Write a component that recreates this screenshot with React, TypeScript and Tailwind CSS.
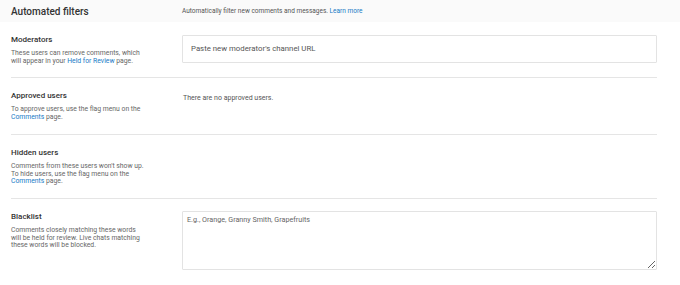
const font = { fontFamily: "Roboto, 'Liberation Sans', sans-serif" };

type RowProps = {
  title: string;
  children: React.ReactNode;
  desc: React.ReactNode;
  last?: boolean;
};

function Row({ title, desc, children, last }: RowProps) {
  return (
    <div className={`flex pt-[13px] pb-[12px] ${last ? "" : "border-b border-[#e5e5e5]"}`}>
      <div className="w-[171px] shrink-0 pr-4">
        <h3 className="text-[8px] leading-[10px] font-medium text-[#333]">{title}</h3>
        <p className="mt-[5px] text-[6.8px] leading-[7.7px] text-[#666] w-[136px]">{desc}</p>
      </div>
      <div className="flex-1">{children}</div>
    </div>
  );
}

const Link = ({ children }: { children: React.ReactNode }) => (
  <a className="text-[#167ac6]">{children}</a>
);

export default function App() {
  return (
    <div className="w-[680px] h-[285px] bg-white overflow-hidden" style={font}>
      <div className="h-[22px] bg-[#fafafa] flex items-center pl-[11px]">
        <h2 className="w-[171px] shrink-0 text-[10px] font-medium text-[#333] pt-[1px]">
          Automated filters
        </h2>
        <p className="text-[6.5px] text-[#555] pt-[2px]">
          Automatically filter new comments and messages. <Link>Learn more</Link>
        </p>
      </div>

      <div className="pl-[11px] pr-[23px]">
        <Row
          title="Moderators"
          desc={
            <>
              These users can remove comments, which will appear in your <Link>Held for Review</Link> page.
            </>
          }
        >
          <div className="h-[28px] border border-[#e3e3e3] rounded-[1px] flex items-center px-[8px]">
            <span className="text-[7.8px] text-[#555]">Paste new moderator's channel URL</span>
          </div>
        </Row>

        <Row
          title="Approved users"
          desc={
            <>
              To approve users, use the flag menu on the <Link>Comments</Link> page.
            </>
          }
        >
          <p className="pl-[1px] pt-[2px] text-[7px] leading-[10px] text-[#555]">There are no approved users.</p>
        </Row>

        <Row
          title="Hidden users"
          desc={
            <>
              Comments from these users won't show up. To hide users, use the flag menu on the <Link>Comments</Link> page.
            </>
          }
        >
          <div />
        </Row>

        <Row
          last
          title="Blacklist"
          desc={<>Comments closely matching these words will be held for review. Live chats matching these words will be blocked.</>}
        >
          <textarea
            placeholder="E.g., Orange, Granny Smith, Grapefruits"
            className="-mt-[1px] block w-full h-[59px] border border-[#e3e3e3] rounded-[1px] px-[4px] py-[3px] text-[7.2px] leading-[10px] text-[#333] placeholder:text-[#666] outline-none"
          />
        </Row>
      </div>
    </div>
  );
}
